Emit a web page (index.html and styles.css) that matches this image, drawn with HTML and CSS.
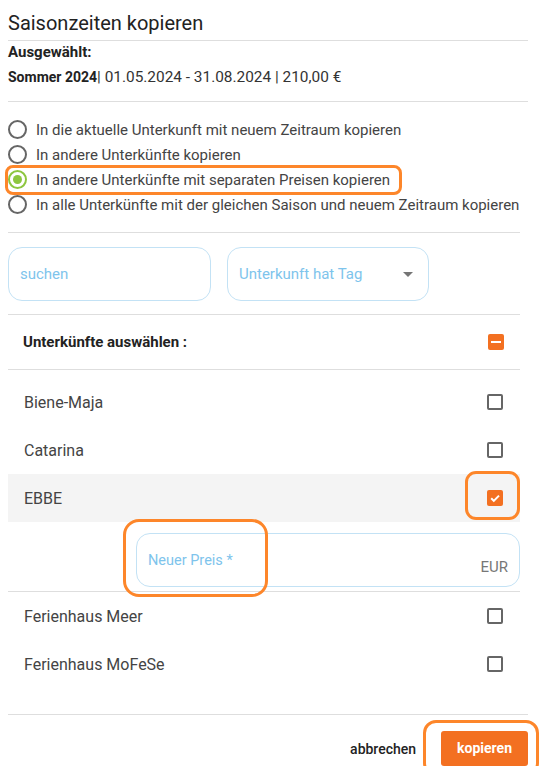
FILE: index.html
```html
<!DOCTYPE html>
<html lang="de">
<head>
<meta charset="utf-8">
<title>Saisonzeiten kopieren</title>
<link rel="stylesheet" href="styles.css">
</head>
<body>
<div class="dialog">
  <h1 class="title">Saisonzeiten kopieren</h1>
  <div class="rule"></div>
  <div class="sel-label">Ausgewählt:</div>
  <div class="sel-value"><b>Sommer 2024</b>| 01.05.2024 - 31.08.2024 | 210,00 €</div>
  <div class="rule rule-sel"></div>

  <div class="radios">
    <label class="radio"><span class="dot"></span>In die aktuelle Unterkunft mit neuem Zeitraum kopieren</label>
    <label class="radio"><span class="dot"></span>In andere Unterkünfte kopieren</label>
    <label class="radio checked"><span class="dot"></span>In andere Unterkünfte mit separaten Preisen kopieren</label>
    <label class="radio"><span class="dot"></span>In alle Unterkünfte mit der gleichen Saison und neuem Zeitraum kopieren</label>
  </div>

  <div class="content">
    <div class="rule"></div>
    <div class="filters">
      <div class="field"><span class="ph">suchen</span></div>
      <div class="field select"><span class="ph">Unterkunft hat Tag</span><span class="caret"></span></div>
    </div>
    <div class="rule"></div>
    <div class="list-head">
      <span>Unterkünfte auswählen :</span>
      <span class="cb indet"></span>
    </div>
    <div class="rule"></div>
    <div class="list">
      <div class="item"><span>Biene-Maja</span><span class="cb"></span></div>
      <div class="item"><span>Catarina</span><span class="cb"></span></div>
      <div class="item active"><span>EBBE</span><span class="cb on"><svg viewBox="0 0 16 16" width="16" height="16"><path d="M4.2 8.3l2.6 2.6L12 5.6" fill="none" stroke="#fff" stroke-width="2"/></svg></span></div>
      <div class="price-wrap">
        <div class="price"><span class="ph ph-price">Neuer Preis *</span><span class="suffix">EUR</span></div>
      </div>
      <div class="rule"></div>
      <div class="item"><span>Ferienhaus Meer</span><span class="cb"></span></div>
      <div class="item"><span>Ferienhaus MoFeSe</span><span class="cb"></span></div>
    </div>
  </div>

  <div class="rule rule-foot"></div>
  <div class="footer">
    <span class="cancel">abbrechen</span>
    <span class="btn">kopieren</span>
  </div>

  <div class="mark m1"></div>
  <div class="mark m2"></div>
  <div class="mark m3"></div>
  <div class="mark m4"></div>
</div>
</body>
</html>
```

FILE: styles.css
```css
html, body {
  margin: 0;
  padding: 0;
  background: #fff;
}
body {
  font-family: Roboto, "Liberation Sans", sans-serif;
  color: #333;
  font-size: 15px;
}
.dialog {
  position: relative;
  width: 520px;
  padding-left: 8px;
}
.title {
  margin: 0;
  padding-top: 11px;
  font-size: 20px;
  line-height: 24px;
  font-weight: 400;
  color: #222;
}
.rule {
  height: 1px;
  background: #dedede;
}
.title + .rule {
  margin-top: 5px;
}
.sel-label {
  margin-top: 1px;
  line-height: 20px;
  font-weight: 700;
  color: #222;
}
.sel-value {
  margin-top: 5px;
  line-height: 20px;
  font-size: 15.4px;
  color: #333;
}
.sel-value b {
  font-size: 14px;
  color: #222;
}
.rule-sel {
  margin-top: 14px;
}
.radios {
  padding: 15px 0;
}
.radio {
  display: flex;
  align-items: center;
  height: 25px;
  color: #444;
  white-space: nowrap;
}
.dot {
  box-sizing: border-box;
  width: 19px;
  height: 19px;
  border: 2px solid #666;
  border-radius: 50%;
  margin-right: 9px;
  flex: none;
  display: flex;
  align-items: center;
  justify-content: center;
}
.radio.checked .dot {
  border-color: #8dc63f;
}
.radio.checked .dot::after {
  content: "";
  width: 9px;
  height: 9px;
  border-radius: 50%;
  background: #8dc63f;
}
.content {
  width: 512px;
}
.filters {
  display: flex;
  gap: 16px;
  padding: 14px 0 13px;
}
.field {
  box-sizing: border-box;
  width: 203px;
  height: 54px;
  border: 1px solid #c3e2f5;
  border-radius: 14px;
  display: flex;
  align-items: center;
  padding: 0 11px;
}
.select {
  width: 202px;
  justify-content: space-between;
  padding-right: 10px;
}
.ph {
  color: #7ec4ec;
  font-size: 15px;
}
.caret {
  width: 0;
  height: 0;
  border-left: 5px solid transparent;
  border-right: 5px solid transparent;
  border-top: 5px solid #757575;
  margin-right: 5px;
}
.list-head {
  height: 54px;
  display: flex;
  align-items: center;
  justify-content: space-between;
  padding: 0 16px 0 15px;
  font-weight: 700;
  color: #222;
}
.list {
  padding-top: 8px;
}
.item {
  height: 48px;
  display: flex;
  align-items: center;
  justify-content: space-between;
  padding: 0 17px 0 16px;
  font-size: 16px;
  color: #444;
}
.item.active {
  background: #f4f4f4;
}
.cb {
  box-sizing: border-box;
  width: 16px;
  height: 16px;
  border: 2px solid #666;
  border-radius: 2px;
  flex: none;
  display: flex;
  align-items: center;
  justify-content: center;
}
.cb.on, .cb.indet {
  border: none;
  background: #f37021;
}
.cb.indet::after {
  content: "";
  width: 10px;
  height: 2px;
  background: #fff;
}
.price-wrap {
  padding: 11px 0 4px 128px;
}
.price {
  box-sizing: border-box;
  height: 54px;
  border: 1px solid #c3e2f5;
  border-radius: 14px;
  display: flex;
  justify-content: space-between;
  align-items: center;
  padding: 0 11px 0 11px;
}
.ph-price {
  font-size: 14.5px;
}
.price .suffix {
  color: #777;
  font-size: 15px;
  margin-top: 13px;
}
.list > .item:last-child {
  margin-bottom: 26px;
}
.footer {
  display: flex;
  justify-content: flex-end;
  align-items: center;
  gap: 25px;
  padding-top: 16px;
}
.cancel {
  font-size: 14px;
  font-weight: 500;
  color: #222;
}
.btn {
  height: 35px;
  line-height: 35px;
  padding: 0 16px;
  background: #f37021;
  color: #fff;
  font-size: 14px;
  font-weight: 700;
  border-radius: 3px;
}
.mark {
  position: absolute;
  border: 3px solid #fd862a;
  box-sizing: border-box;
}
.m1 {
  left: 5px;
  top: 165px;
  width: 397px;
  height: 30px;
  border-radius: 8px;
}
.m2 {
  left: 465px;
  top: 471px;
  width: 55px;
  height: 49px;
  border-radius: 11px;
}
.m3 {
  left: 123px;
  top: 519px;
  width: 145px;
  height: 78px;
  border-radius: 16px;
}
.m4 {
  left: 423px;
  top: 720px;
  width: 116px;
  height: 56px;
  border-radius: 13px;
}
```
